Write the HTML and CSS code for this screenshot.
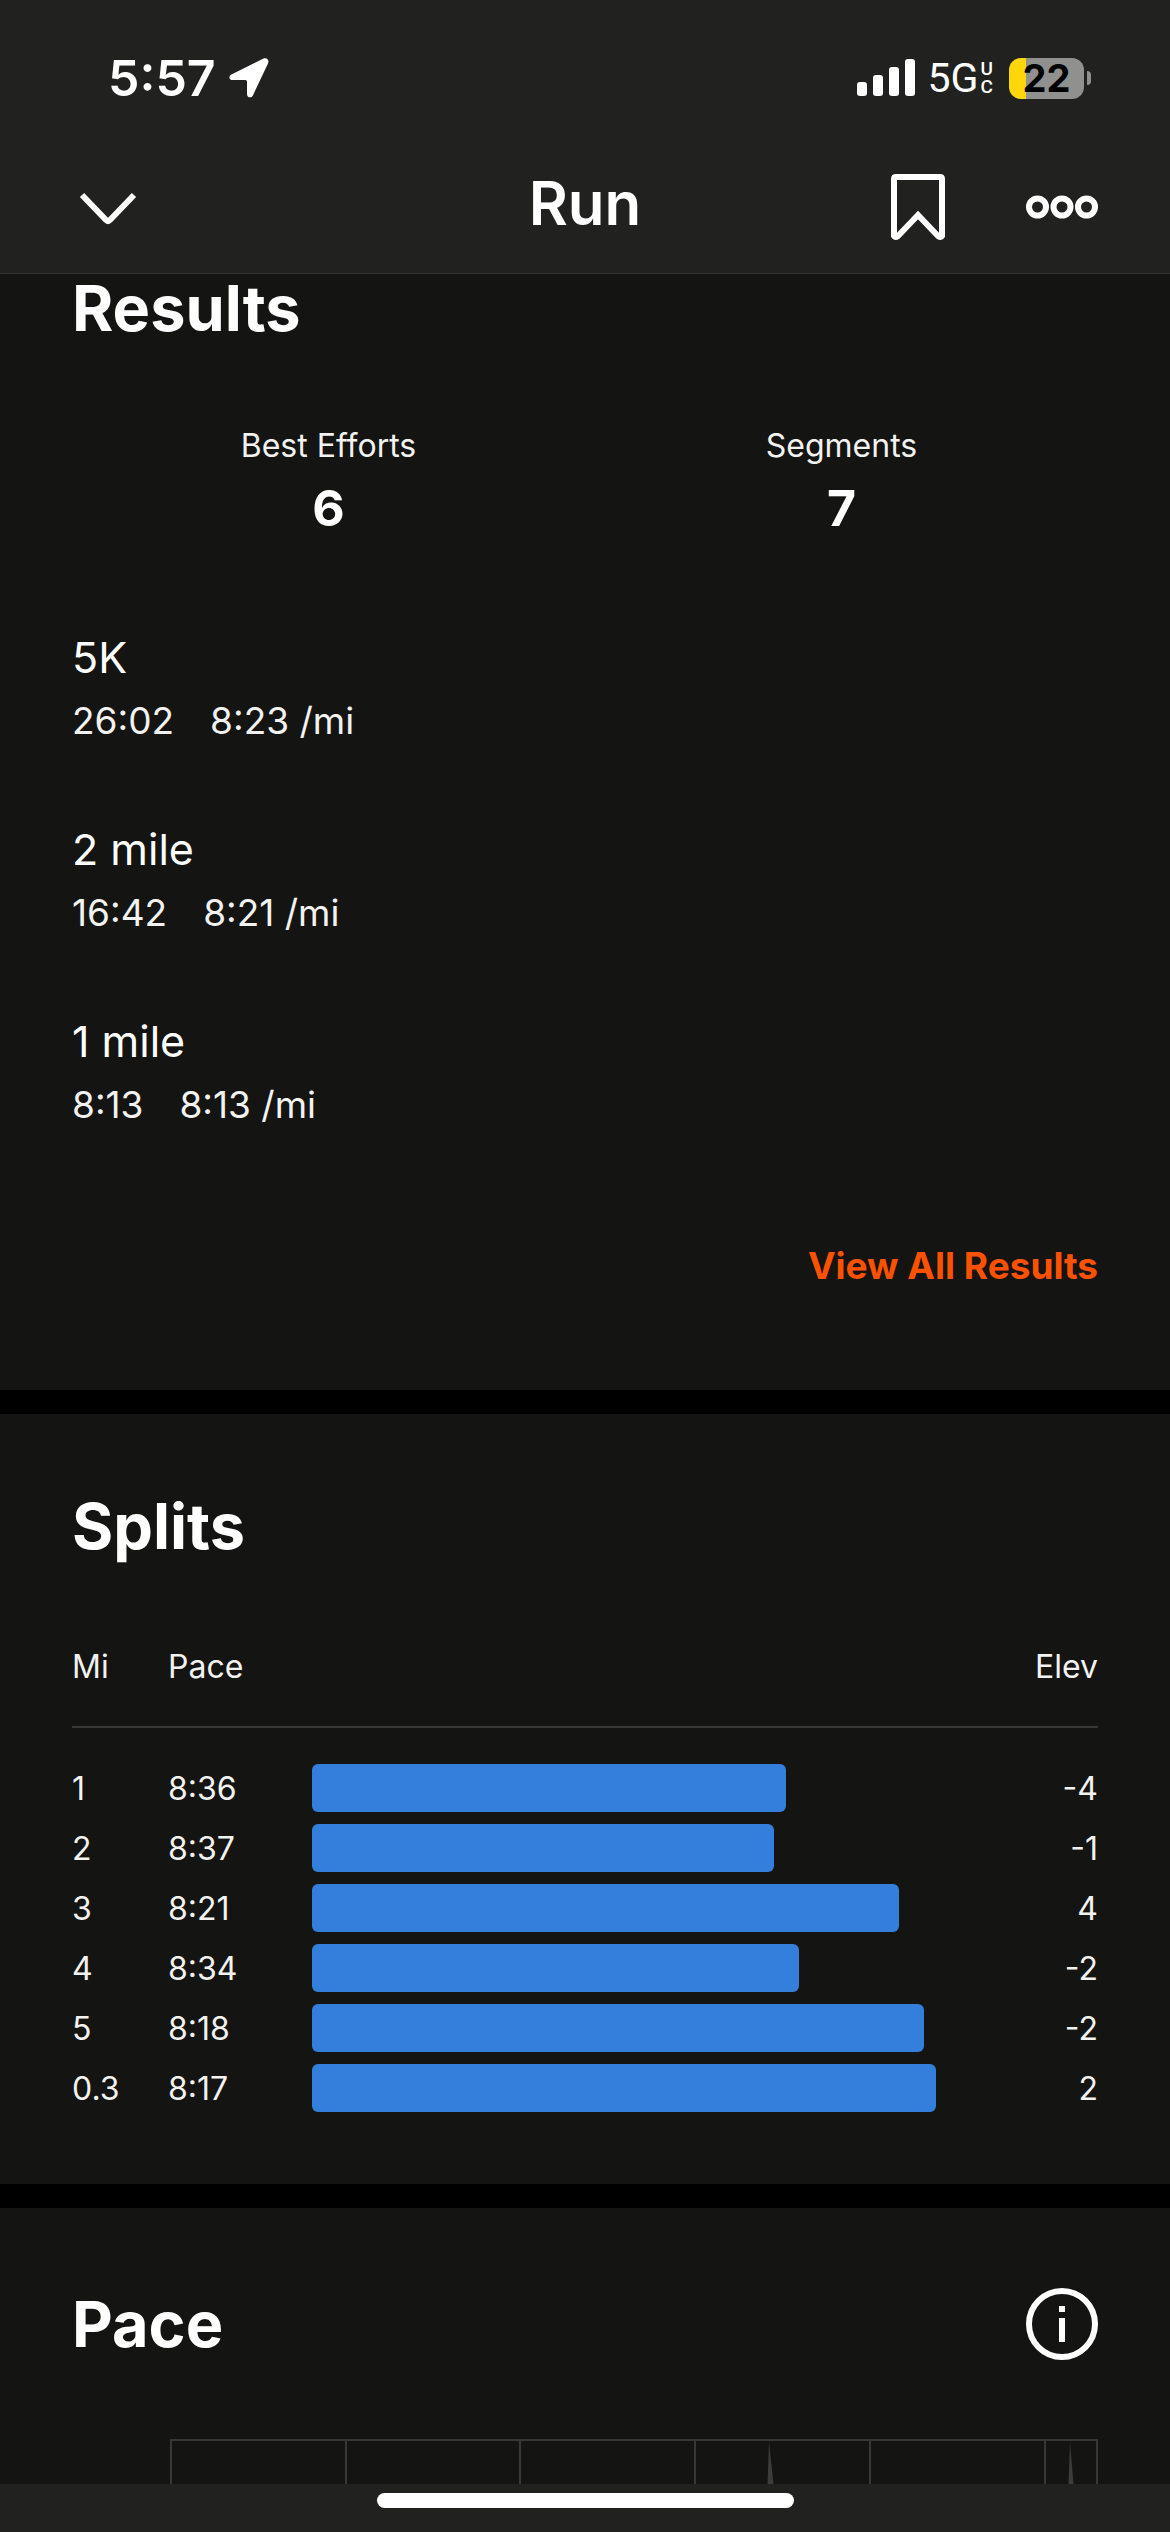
FILE: index.html
```html
<!DOCTYPE html>
<html lang="en">
<head>
<meta charset="utf-8">
<meta name="viewport" content="width=device-width">
<title>Run</title>
<link rel="stylesheet" href="styles.css">
</head>
<body>
<header class="top">
  <div class="status">
    <div class="status-left">
      <span class="clock">5:57</span>
      <svg class="icon" width="40" height="40" viewBox="0 0 40 40" fill="#fff"><path d="M34.500.6 2.400 16.400C-.6 18-.2 22 3.400 22H16.500Q18 22 18 23.500V36C18 40 22.600 40.500 24 37.200L39 5.500C40.500 2 37.800-.9 34.500.6Z"/></svg>
    </div>
    <div class="status-right">
      <svg class="icon" width="58" height="38" viewBox="0 0 58 38" fill="#fff"><rect y="23" width="10" height="14" rx="3"/><rect x="16" y="16" width="10" height="21" rx="3"/><rect x="32" y="8" width="10" height="29" rx="3"/><rect x="48" width="10" height="37" rx="3"/></svg>
      <span class="network">5G<span class="network-sub"><span>U</span><span>C</span></span></span>
      <span class="battery"><span class="battery-level">22</span><span class="battery-nub"></span></span>
    </div>
  </div>
  <nav class="nav">
    <button class="icon-button" aria-label="Close"><svg class="icon" width="72" height="72" viewBox="0 0 72 72" fill="none" stroke="#fff" stroke-width="6"><path d="M10 24 34 49Q36 51 38 49L62 24"/></svg></button>
    <h1 class="title">Run</h1>
    <div class="nav-actions">
      <button class="icon-button" aria-label="Save"><svg class="icon" width="72" height="72" viewBox="0 0 72 72" fill="none" stroke="#fff" stroke-width="6"><path d="M14 6H58Q60 6 60 8V65Q59 67 56 65L36 44 16 65Q13 67 12 65V8Q12 6 14 6Z"/></svg></button>
      <button class="icon-button" aria-label="More"><svg class="icon" width="72" height="72" viewBox="0 0 72 72" fill="none" stroke="#fff" stroke-width="6"><circle cx="11.500" cy="36" r="8.500"/><circle cx="36" cy="36" r="8.500"/><circle cx="60.500" cy="36" r="8.500"/></svg></button>
    </div>
  </nav>
</header>
<main class="content">
  <section class="results" id="results">
    <h2 class="heading">Results</h2>
    <dl class="totals">
      <div class="total"><dt>Best Efforts</dt><dd>6</dd></div>
      <div class="total"><dt>Segments</dt><dd>7</dd></div>
    </dl>
    <ul class="efforts">
      <li class="effort"><h3>5K</h3><p><span>26:02</span><span>8:23 /mi</span></p></li>
      <li class="effort"><h3>2 mile</h3><p><span>16:42</span><span>8:21 /mi</span></p></li>
      <li class="effort"><h3>1 mile</h3><p><span>8:13</span><span>8:13 /mi</span></p></li>
    </ul>
    <a class="view-all" href="#results">View All Results</a>
  </section>
  <section class="splits">
    <h2 class="heading">Splits</h2>
    <table class="split-table">
      <colgroup><col class="col-mi"><col class="col-pace"><col><col class="col-elev"></colgroup>
      <thead><tr><th>Mi</th><th>Pace</th><th></th><th class="elev">Elev</th></tr></thead>
      <tbody>
        <tr><td>1</td><td>8:36</td><td><div class="bar" style="width:76%"></div></td><td class="elev">-4</td></tr>
        <tr><td>2</td><td>8:37</td><td><div class="bar" style="width:74%"></div></td><td class="elev">-1</td></tr>
        <tr><td>3</td><td>8:21</td><td><div class="bar" style="width:94%"></div></td><td class="elev">4</td></tr>
        <tr><td>4</td><td>8:34</td><td><div class="bar" style="width:78%"></div></td><td class="elev">-2</td></tr>
        <tr><td>5</td><td>8:18</td><td><div class="bar" style="width:98%"></div></td><td class="elev">-2</td></tr>
        <tr><td>0.3</td><td>8:17</td><td><div class="bar" style="width:100%"></div></td><td class="elev">2</td></tr>
      </tbody>
    </table>
  </section>
  <section class="pace">
    <div class="pace-head">
      <h2 class="heading">Pace</h2>
      <button class="icon-button" aria-label="About pace"><svg class="icon" width="72" height="72" viewBox="0 0 72 72" fill="none" stroke="#fff" stroke-width="6"><circle cx="36" cy="36" r="33"/><path d="M36 18V24M36 30V54"/></svg></button>
    </div>
    <svg class="chart" viewBox="0 0 928 45" fill="none" stroke="#383836" stroke-width="2"><path d="M599 3 597.500 45H603.500ZM900 3 898.500 45H903.500Z" fill="#3c3c3a" stroke="none"/><path d="M0 1H928M1 1V45M176 1V45M350 1V45M525 1V45M700 1V45M875 1V45M927 1V45"/></svg>
  </section>
</main>
<footer class="home"><div class="home-bar"></div></footer>
</body>
</html>
```
FILE: styles.css
```css
* { box-sizing: border-box; margin: 0; padding: 0; }
body {
  min-height: 100vh;
  display: flex;
  flex-direction: column;
  background: #000;
  color: #fff;
  font-family: Inter, "Liberation Sans", sans-serif;
}
.icon { display: block; flex: none; }
.icon-button { display: block; border: 0; background: none; }
.top { background: #212120; border-bottom: 1px solid #353533; }
.status {
  height: 156px;
  padding: 0 79px 0 108px;
  display: flex;
  align-items: center;
  justify-content: space-between;
}
.status-left { display: flex; align-items: center; gap: 13px; }
.clock { font-size: 50px; font-weight: 600; line-height: 60px; }
.status-right { display: flex; align-items: center; }
.network { display: flex; align-items: center; margin-left: 13px; font-family: Roboto, sans-serif; font-size: 41px; line-height: 48px; }
.network-sub { display: grid; margin-left: 2px; font-size: 19px; font-weight: 500; line-height: 18px; }
.battery { display: flex; align-items: center; gap: 3px; margin-left: 16px; }
.battery-level {
  width: 75px;
  height: 41px;
  border-radius: 12px;
  background: linear-gradient(90deg, #ffd60a 17px, #90908f 17px);
  color: #000;
  font-size: 38px;
  font-weight: 700;
  line-height: 41px;
  text-align: center;
}
.battery-nub { width: 4px; height: 14px; border-radius: 0 4px 4px 0; background: #90908f; }
.nav {
  height: 117px;
  padding: 12px 72px 27px;
  display: grid;
  grid-template-columns: 1fr auto 1fr;
  align-items: center;
}
.title { padding-bottom: 8px; font-size: 60px; font-weight: 600; line-height: 70px; }
.nav-actions { display: flex; justify-content: flex-end; gap: 72px; }
.content { flex: 1; display: flex; flex-direction: column; gap: 24px; }
.results, .splits, .pace { padding: 0 72px; background: #141412; }
.heading { font-size: 63px; font-weight: 700; line-height: 68px; }
.results { display: flex; flex-direction: column; }
.totals { display: grid; grid-template-columns: 1fr 1fr; margin-top: 80px; text-align: center; }
.total dt { color: #f2f2f0; font-size: 32px; line-height: 48px; }
.total dd { font-size: 50px; font-weight: 700; line-height: 76px; }
.efforts { margin-top: 81px; display: grid; gap: 68px; list-style: none; }
.effort h3 { font-size: 43px; font-weight: 400; line-height: 60px; }
.effort p { display: flex; gap: 36px; margin-top: 4px; color: #f2f2f0; font-size: 37px; line-height: 60px; }
.view-all {
  align-self: flex-end;
  margin: 107px 0 100px;
  color: #fc5200;
  font-size: 37px;
  font-weight: 700;
  line-height: 48px;
  text-decoration: none;
}
.splits { padding-top: 78px; padding-bottom: 66px; }
.split-table { width: 100%; margin-top: 74px; table-layout: fixed; border-collapse: collapse; color: #f2f2f0; font-size: 32px; }
.col-mi { width: 96px; }
.col-pace { width: 144px; }
.col-elev { width: 162px; }
.split-table th { height: 93px; padding-bottom: 28px; border-bottom: 2px solid #383836; font-weight: 400; text-align: left; }
.split-table td { height: 60px; }
.split-table .elev { text-align: right; }
.split-table tbody::before { content: ""; display: block; height: 30px; }
.bar { height: 48px; border-radius: 6px; background: #347fdc; }
.pace { flex: 1; padding-top: 80px; }
.pace-head { display: flex; align-items: center; justify-content: space-between; }
.chart { display: block; margin-top: 79px; margin-left: 98px; width: calc(100% - 98px); }
.home { height: 48px; padding-top: 9px; background: #212120; }
.home-bar { width: 417px; height: 15px; margin: 0 auto; border-radius: 8px; background: #fff; }
```
